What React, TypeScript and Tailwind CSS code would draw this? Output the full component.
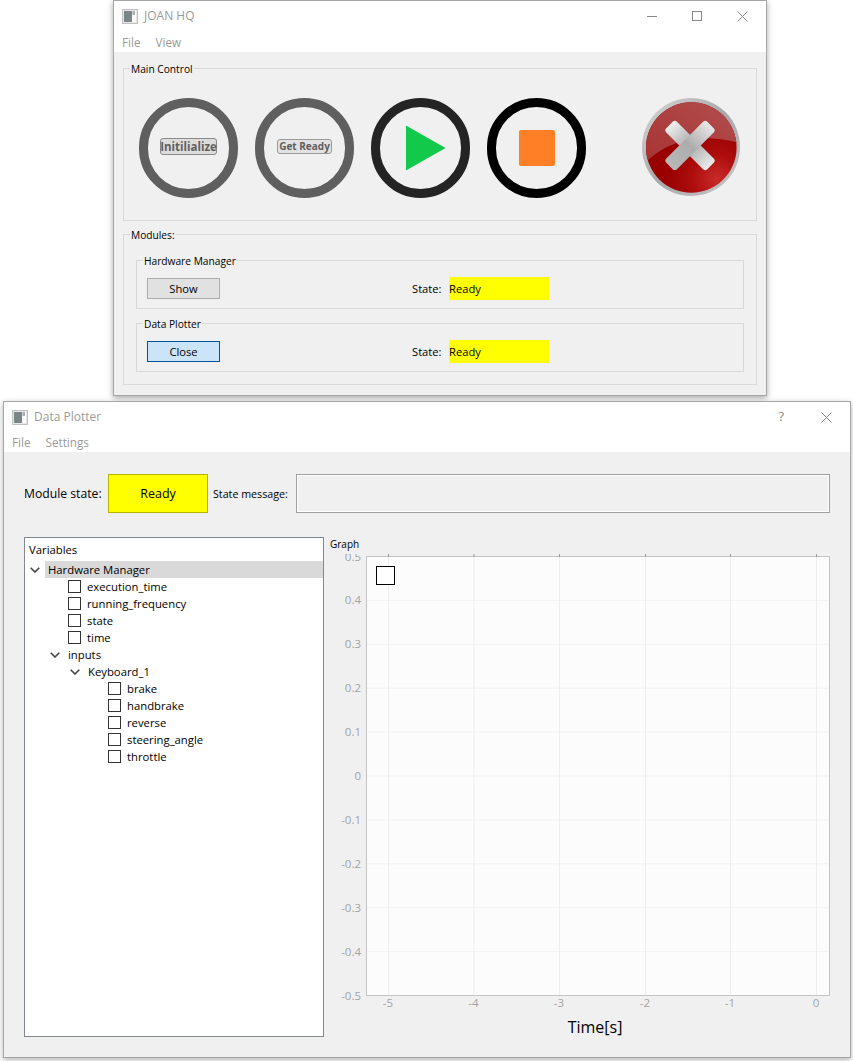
import type { ReactNode } from 'react';

const FONT = "font-['Open_Sans','Noto_Sans',sans-serif]";

const X_TICKS = [
  { label: '-5', x: 58 },
  { label: '-4', x: 143.5 },
  { label: '-3', x: 229 },
  { label: '-2', x: 315 },
  { label: '-1', x: 400 },
  { label: '0', x: 486 },
];

const Y_TICKS = ['0.5', '0.4', '0.3', '0.2', '0.1', '0', '-0.1', '-0.2', '-0.3', '-0.4', '-0.5'];

const TREE_ROWS = [
  { label: 'execution_time', pad: 'pl-5', check: true },
  { label: 'running_frequency', pad: 'pl-5', check: true },
  { label: 'state', pad: 'pl-5', check: true },
  { label: 'time', pad: 'pl-5', check: true },
  { label: 'inputs', pad: 'pl-5', check: false },
  { label: 'Keyboard_1', pad: 'pl-10', check: false },
  { label: 'brake', pad: 'pl-15', check: true },
  { label: 'handbrake', pad: 'pl-15', check: true },
  { label: 'reverse', pad: 'pl-15', check: true },
  { label: 'steering_angle', pad: 'pl-15', check: true },
  { label: 'throttle', pad: 'pl-15', check: true },
];

function AppIcon() {
  return (
    <svg width="16" height="15" viewBox="0 0 16 15">
      <rect x="0.5" y="0.5" width="15" height="14" fill="#e8e8e8" stroke="#c0c0c0" />
      <rect x="2" y="2" width="8" height="11" fill="#7a8686" />
      <rect x="10" y="2" width="4" height="11" fill="#fbfbfb" />
      <rect x="10.5" y="2" width="2.5" height="4" fill="#a8adad" />
    </svg>
  );
}

function CloseIcon() {
  return (
    <svg width="11" height="11" viewBox="0 0 11 11" stroke="#8a8a8a" fill="none">
      <path d="M0.5 0.5 10.5 10.5M10.5 0.5 0.5 10.5" />
    </svg>
  );
}

function TitleBar({ title, menus, height, children }: { title: string; menus: string[]; height: string; children: ReactNode }) {
  return (
    <div className={`bg-white shrink-0 flex flex-col ${height}`}>
      <div className="flex items-center h-[30px] pl-2 relative">
        <AppIcon />
        <span className="ml-[6px] text-[#9a9a9a] text-[12px]">{title}</span>
        <div className="ml-auto flex items-center h-full">{children}</div>
      </div>
      <div className="flex flex-1 pl-2 pt-[2px] gap-[15px] items-center text-[#9a9a9a] text-[11.7px]">
        {menus.map((m) => (
          <span key={m}>{m}</span>
        ))}
      </div>
    </div>
  );
}

function Group({ title, className, children }: { title: string; className: string; children: ReactNode }) {
  return (
    <fieldset className={`border border-[#d9d9d9] ${className}`}>
      <legend className="ml-[6px] px-[1px] h-4 pt-[2px] text-[10.2px] leading-[14px] text-black">{title}</legend>
      {children}
    </fieldset>
  );
}

function Ring({ color, children }: { color: string; children: ReactNode }) {
  return (
    <div className={`w-[99px] h-[100px] rounded-full border-[9px] flex items-center justify-center ${color}`}>
      {children}
    </div>
  );
}

function RedCross() {
  return (
    <svg width="98" height="100" viewBox="0 0 98 100">
      <defs>
        <linearGradient id="rim" x1="0" y1="0" x2="1" y2="1">
          <stop offset="0" stopColor="#d8d8d8" />
          <stop offset="0.5" stopColor="#a8a8a8" />
          <stop offset="1" stopColor="#c8c8c8" />
        </linearGradient>
        <radialGradient id="base" cx="0.78" cy="0.85" r="0.55">
          <stop offset="0" stopColor="#c92a2a" />
          <stop offset="0.5" stopColor="#ad0d0d" />
          <stop offset="1" stopColor="#990000" />
        </radialGradient>
        <linearGradient id="gloss" x1="0" y1="1" x2="1" y2="0">
          <stop offset="0" stopColor="#a83232" />
          <stop offset="1" stopColor="#b25050" />
        </linearGradient>
        <linearGradient id="armA" x1="0" y1="0" x2="1" y2="0">
          <stop offset="0" stopColor="#f0f0f0" />
          <stop offset="0.5" stopColor="#a8a8a8" />
          <stop offset="1" stopColor="#ececec" />
        </linearGradient>
        <linearGradient id="armB" x1="0" y1="0" x2="1" y2="0">
          <stop offset="0" stopColor="#b8b8b8" />
          <stop offset="0.5" stopColor="#acacac" />
          <stop offset="1" stopColor="#e8e8e8" />
        </linearGradient>
        <clipPath id="disc">
          <circle cx="49.3" cy="49.5" r="45.3" />
        </clipPath>
      </defs>
      <circle cx="49" cy="49" r="49" fill="url(#rim)" />
      <circle cx="49.3" cy="49.5" r="45.3" fill="url(#base)" />
      <path d="M0 68C16 50 44 38 66 40C78 41 88 42 98 45V0H0Z" fill="url(#gloss)" clipPath="url(#disc)" />
      <rect x="19" y="40" width="58" height="15" rx="3" fill="url(#armA)" transform="rotate(45 48 47.5)" />
      <rect x="19" y="40" width="58" height="15" rx="3" fill="url(#armB)" transform="rotate(-45 48 47.5)" />
    </svg>
  );
}

function ModuleRow({ title, button, active, className }: { title: string; button: string; active?: boolean; className: string }) {
  return (
    <Group title={title} className={`h-[57px] ${className}`}>
      <div className="flex items-center h-[23px] mt-[9px] pl-[10px] text-[11.2px] text-black">
        <button
          className={`w-[73px] h-[21px] pt-[2px] border text-center ${
            active ? 'bg-[#cce4f7] border-[#005499]' : 'bg-[#e1e1e1] border-[#adadad]'
          }`}
        >
          {button}
        </button>
        <span className="ml-[192px] w-[37px] pt-[2px]">State:</span>
        <span className="w-[100px] h-[23px] pt-[2px] bg-[#ffff00] flex items-center">Ready</span>
      </div>
    </Group>
  );
}

function Chevron() {
  return (
    <svg width="10" height="6" viewBox="0 0 10 6" fill="none" stroke="#444444" strokeWidth="1.6">
      <path d="M0.7 0.7 5 5 9.3 0.7" />
    </svg>
  );
}

function Tree() {
  return (
    <div className="w-[300px] h-[500px] bg-white border border-[#828790] shrink-0 text-[11.3px] text-black">
      <div className="h-[23px] pl-1 pt-[2px] flex items-center">Variables</div>
      <div className="flex items-center h-[17px]">
        <span className="w-5 flex justify-center">
          <Chevron />
        </span>
        <span className="flex-1 h-full bg-[#d9d9d9] pl-[3px] pt-[2px] flex items-center">Hardware Manager</span>
      </div>
      {TREE_ROWS.map((row) => (
        <div key={row.label} className={`flex items-center h-[17px] ${row.pad}`}>
          <span className="w-5 flex justify-center">{!row.check && <Chevron />}</span>
          {row.check ? (
            <span className="ml-[3px] mr-[6px] w-[13px] h-[13px] border border-[#333333] bg-white" />
          ) : (
            <span className="ml-[3px]" />
          )}
          <span className="pt-[2px]">{row.label}</span>
        </div>
      ))}
    </div>
  );
}

function Plot() {
  const yFor = (i: number) => 2.5 + i * 43.9;
  return (
    <svg width="501" height="459" viewBox="0 0 501 459" className="block">
      <rect x="36.5" y="2.5" width="463" height="439" fill="#fcfcfc" stroke="#c4c4c4" />
      {Y_TICKS.map((t, i) => (
        <g key={t}>
          {i > 0 && i < 10 && <line x1="37" x2="499" y1={yFor(i)} y2={yFor(i)} stroke="#f2f2f2" />}
          <text x="31" y={yFor(i) + 4} textAnchor="end" fontSize="11.5" fill="#a3a3a3" fontFamily="Open Sans">
            {t}
          </text>
        </g>
      ))}
      {X_TICKS.map((t) => (
        <g key={t.label}>
          <line x1={t.x + 0.5} x2={t.x + 0.5} y1="3" y2="441" stroke="#eeeeee" />
          <line x1={t.x + 0.5} x2={t.x + 0.5} y1="0" y2="3" stroke="#9a9a9a" />
          <text x={t.x} y="453" textAnchor="middle" fontSize="11.5" fill="#a3a3a3" fontFamily="Open Sans">
            {t.label}
          </text>
        </g>
      ))}
      <rect x="46.5" y="12.5" width="18" height="18" fill="#ffffff" stroke="#000000" />
    </svg>
  );
}

export default function App() {
  return (
    <div className={`bg-white w-[853px] h-[1061px] overflow-hidden ${FONT}`}>
      <div className="ml-[113px] w-[654px] h-[396px] border border-[#a6a6a6] bg-[#f0f0f0] flex flex-col shadow-[0_2px_6px_rgba(0,0,0,0.35)]">
        <TitleBar title="JOAN HQ" menus={['File', 'View']} height="h-[51px]">
          <span className="w-[10px] h-px bg-[#8a8a8a]" />
          <span className="ml-[35px] w-[10px] h-[10px] border border-[#8a8a8a]" />
          <span className="ml-[35px] mr-[18px]">
            <CloseIcon />
          </span>
        </TitleBar>
        <div className="pl-[9px]">
          <Group title="Main Control" className="mt-[8px] w-[634px] h-[161px]">
            <div className="flex items-start mt-[22px] pl-[15px]">
              <div className="flex gap-[17px]">
                <Ring color="border-[#5f5f5f]">
                  <span className="mt-[-3px] px-[1px] h-[17px] w-[57px] flex items-center justify-center rounded-[3px] border border-[#8a8a8a] bg-[#dcdcdc] text-[#5f5f5f] text-[11.5px] font-bold whitespace-nowrap">
                    Initilialize
                  </span>
                </Ring>
                <Ring color="border-[#5f5f5f]">
                  <span className="mt-[-3px] h-[15px] w-[55px] flex items-center justify-center rounded-[3px] border border-[#9a9a9a] bg-[#e2e2e2] text-[#5f5f5f] text-[10px] font-bold whitespace-nowrap">
                    Get Ready
                  </span>
                </Ring>
                <Ring color="border-[#242424]">
                  <svg width="40" height="46" viewBox="0 0 40 46" className="ml-[11px]">
                    <path d="M0 0.5 39.5 23 0 45.5Z" fill="#12c94c" />
                  </svg>
                </Ring>
                <Ring color="border-black">
                  <span className="w-9 h-9 rounded-[2px] bg-[#ff7f27]" />
                </Ring>
              </div>
              <div className="ml-[56px]">
                <RedCross />
              </div>
            </div>
          </Group>
          <Group title="Modules:" className="mt-[5px] w-[634px] h-[159px]">
            <div className="px-3">
              <ModuleRow title="Hardware Manager" button="Show" className="mt-[10px]" />
              <ModuleRow title="Data Plotter" button="Close" active className="mt-[6px]" />
            </div>
          </Group>
        </div>
      </div>

      <div className="relative ml-[3px] mt-[5px] w-[848px] h-[657px] border border-[#a6a6a6] bg-[#f0f0f0] flex flex-col shadow-[0_2px_6px_rgba(0,0,0,0.3)]">
        <TitleBar title="Data Plotter" menus={['File', 'Settings']} height="h-[50px]">
          <span className="text-[#8a8a8a] text-[13px] mr-[37px]">?</span>
          <span className="mr-[18px]">
            <CloseIcon />
          </span>
        </TitleBar>
        <div className="pl-5 text-black">
          <div className="flex items-center mt-[22px] h-[39px]">
            <span className="w-[84px] pt-[2px] text-[12.2px]">Module state:</span>
            <span className="w-[100px] h-full pt-[2px] bg-[#ffff00] border border-[#b5b500] flex items-center justify-center text-[12.5px]">
              Ready
            </span>
            <span className="ml-[5px] w-[83px] pt-[2px] text-[10.7px]">State message:</span>
            <span className="w-[534px] h-full border border-[#a0a0a0] shadow-[inset_0_0_0_1px_#ffffff]" />
          </div>
          <div className="flex mt-6">
            <Tree />
            <div className="ml-[6px] w-[501px]">
              <div className="h-[14px] leading-[14px] text-[10px]">Graph</div>
              <div className="mt-[3px]">
                <Plot />
              </div>
              <div className="mt-[2px] h-6 leading-6 text-center text-[16px] pl-[29px]">Time[s]</div>
            </div>
          </div>
        </div>
      </div>
    </div>
  );
}
